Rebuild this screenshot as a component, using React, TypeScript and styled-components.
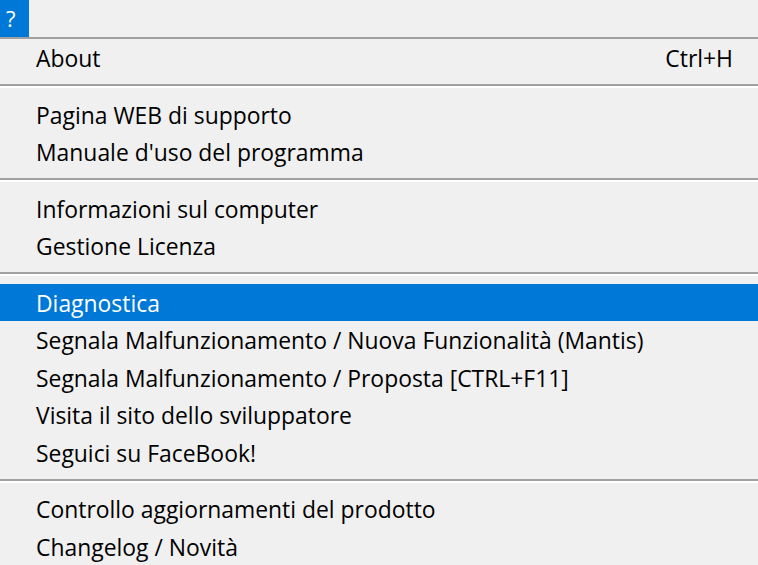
import React from 'react';
import styled, {createGlobalStyle} from 'styled-components';

const GlobalStyle = createGlobalStyle`
    html, body {
        margin: 0;
        padding: 0;
        background: #f0f0f0;
    }
    body {
        font-family: "Open Sans", "Noto Sans", "DejaVu Sans", sans-serif;
        color: #000000;
    }
`

type ItemType = {
    label: string
    shortcut?: string
    active?: boolean
}

const groups: ItemType[][] = [
    [{label: 'About', shortcut: 'Ctrl+H'}],
    [{label: 'Pagina WEB di supporto'}, {label: "Manuale d'uso del programma"}],
    [{label: 'Informazioni sul computer'}, {label: 'Gestione Licenza'}],
    [
        {label: 'Diagnostica', active: true},
        {label: 'Segnala Malfunzionamento / Nuova Funzionalità (Mantis)'},
        {label: 'Segnala Malfunzionamento / Proposta [CTRL+F11]'},
        {label: 'Visita il sito dello sviluppatore'},
        {label: 'Seguici su FaceBook!'},
    ],
    [{label: 'Controllo aggiornamenti del prodotto'}, {label: 'Changelog / Novità'}],
]

export default function App() {
    return (
        <>
            <GlobalStyle/>
            <Page>
                <MenuBar>
                    <MenuTitle>?</MenuTitle>
                </MenuBar>
                <TopRule/>
                <Menu>
                    {groups.map((group, gi) => (
                        <React.Fragment key={gi}>
                            {gi > 0 && <Separator/>}
                            {group.map(item => (
                                <Item key={item.label} active={!!item.active}>
                                    <span>{item.label}</span>
                                    {item.shortcut && <span>{item.shortcut}</span>}
                                </Item>
                            ))}
                        </React.Fragment>
                    ))}
                </Menu>
            </Page>
        </>
    );
}

const Page = styled.div`
    width: 758px;
    height: 565px;
    overflow: hidden;
    background: #f0f0f0;
`

const MenuBar = styled.div`
    display: flex;
    height: 37px;
`

const MenuTitle = styled.div`
    width: 29px;
    background: #0078d7;
    color: #ffffff;
    font-size: 22px;
    line-height: 36px;
    padding-left: 6px;
    box-sizing: border-box;
`

const TopRule = styled.div`
    height: 2px;
    background: #a0a0a0;
`

const Menu = styled.div`
    display: flex;
    flex-direction: column;
`

const Separator = styled.div`
    height: 19px;
    display: flex;
    flex-direction: column;
    justify-content: center;

    &::before {
        content: '';
        height: 2px;
        background: #a0a0a0;
    }

    &::after {
        content: '';
        height: 2px;
        background: #ffffff;
    }
`

const Item = styled.div<{ active: boolean }>`
    height: 37.5px;
    display: flex;
    align-items: center;
    justify-content: space-between;
    padding: 2px 25px 0 36px;
    box-sizing: border-box;
    background: ${props => props.active ? '#0078d7' : 'transparent'};
    color: ${props => props.active ? '#ffffff' : '#000000'};
    font-size: 22.9px;
    white-space: nowrap;
`
